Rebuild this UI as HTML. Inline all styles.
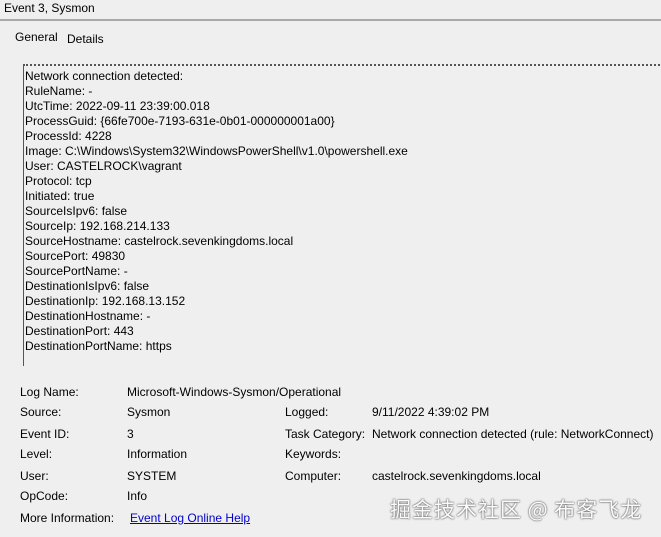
<!DOCTYPE html>
<html><head><meta charset="utf-8"><style>
body{margin:0;width:661px;height:537px;background:#f0efef;font-family:"Liberation Sans",sans-serif;font-size:12px;color:#000;position:relative;overflow:hidden}
.a{position:absolute;white-space:nowrap}
#title{left:4px;top:1px;font-size:12px}
#tl{position:absolute;left:0;top:19px;width:661px;height:2px;background:#a8a8a8}
#box{position:absolute;left:23px;top:64px;width:660px;height:300px;border-top:2px dotted #555;border-left:1px solid #555}
#txt{position:absolute;left:25px;top:69px;line-height:15px}
.g div{position:absolute;white-space:nowrap}
a{color:#0000d0;text-decoration:underline}
#wm{left:390px;top:494px;font-family:"Noto Sans CJK SC",sans-serif;font-size:21px;color:#fafafa;text-shadow:0 0 2px #555,0 0 1px #555;letter-spacing:1px}
</style></head><body>
<div class="a" id="title">Event 3, Sysmon</div>
<div id="tl"></div>
<div class="a" style="left:15px;top:30px;font-size:12px">General</div>
<div class="a" style="left:67px;top:32px;font-size:12px">Details</div>
<div id="box"></div>
<div class="a" id="txt">Network connection detected:<br>RuleName: -<br>UtcTime: 2022-09-11 23:39:00.018<br>ProcessGuid: {66fe700e-7193-631e-0b01-000000001a00}<br>ProcessId: 4228<br>Image: C:\Windows\System32\WindowsPowerShell\v1.0\powershell.exe<br>User: CASTELROCK\vagrant<br>Protocol: tcp<br>Initiated: true<br>SourceIsIpv6: false<br>SourceIp: 192.168.214.133<br>SourceHostname: castelrock.sevenkingdoms.local<br>SourcePort: 49830<br>SourcePortName: -<br>DestinationIsIpv6: false<br>DestinationIp: 192.168.13.152<br>DestinationHostname: -<br>DestinationPort: 443<br>DestinationPortName: https</div>
<div class="g">
<div style="left:20px;top:385px">Log Name:</div><div style="left:127px;top:385px">Microsoft-Windows-Sysmon/Operational</div>
<div style="left:20px;top:405px">Source:</div><div style="left:127px;top:405px">Sysmon</div><div style="left:285px;top:405px">Logged:</div><div style="left:372px;top:405px">9/11/2022 4:39:02 PM</div>
<div style="left:20px;top:427px">Event ID:</div><div style="left:127px;top:427px">3</div><div style="left:285px;top:427px">Task Category:</div><div style="left:372px;top:427px">Network connection detected (rule: NetworkConnect)</div>
<div style="left:20px;top:447px">Level:</div><div style="left:127px;top:447px">Information</div><div style="left:285px;top:447px">Keywords:</div>
<div style="left:20px;top:469px">User:</div><div style="left:127px;top:469px">SYSTEM</div><div style="left:285px;top:469px">Computer:</div><div style="left:372px;top:469px">castelrock.sevenkingdoms.local</div>
<div style="left:20px;top:489px">OpCode:</div><div style="left:127px;top:489px">Info</div>
<div style="left:20px;top:511px">More Information:</div><div style="left:130px;top:511px"><a>Event Log Online Help</a></div>
</div>
<div class="a" id="wm">掘金技术社区 @ 布客飞龙</div>
</body></html>
